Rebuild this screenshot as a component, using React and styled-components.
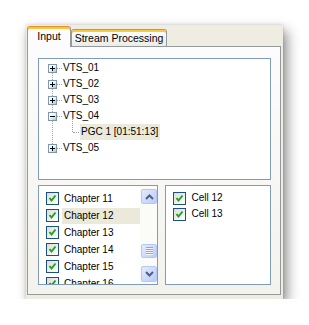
import React from 'react';
import styled, { createGlobalStyle } from 'styled-components';

const GlobalStyle = createGlobalStyle`
  body {
    margin: 0;
    background: #fff;
    font-family: "Liberation Sans", Arial, sans-serif;
    color: #000;
  }
`;

const Window = styled.div`
  margin: 25px 0 0 26px;
  width: 257px;
  height: 274px;
  box-sizing: border-box;
  padding: 1px 2px 4px 1px;
  background: #efede2;
  box-shadow: 4px 6px 12px rgba(0, 0, 0, 0.45), 0 0 3px rgba(0, 0, 0, 0.15);
  display: flex;
  flex-direction: column;
`;

const TabStrip = styled.div`
  display: flex;
  align-items: flex-end;
  height: 20px;
`;

const Tab = styled.div`
  box-sizing: border-box;
  position: relative;
  z-index: ${(props) => (props.active ? 1 : 0)};
  height: ${(props) => (props.active ? '21px' : '17px')};
  margin-bottom: ${(props) => (props.active ? '-1px' : '0')};
  width: ${(props) => props.w}px;
  display: flex;
  align-items: center;
  justify-content: center;
  padding-bottom: ${(props) => (props.active ? '3px' : '1px')};
  border: 1px solid #919b9c;
  border-bottom: none;
  border-top: 1px solid #e68b2c;
  border-radius: 3px 3px 0 0;
  box-shadow: inset 0 2px 0 #ffc73c;
  background: ${(props) =>
    props.active ? '#fcfcfe' : 'linear-gradient(#ffffff, #ecebe6)'};
  font-size: 10.5px;
  white-space: nowrap;
`;

const Page = styled.div`
  flex: 1;
  box-sizing: border-box;
  border: 1px solid #919b9c;
  background: linear-gradient(#fcfcfe, #f3f2ec);
  padding: 11px 9px 9px 10px;
  display: flex;
  flex-direction: column;
  gap: 5px;
`;

const Tree = styled.div`
  height: 122px;
  box-sizing: border-box;
  border: 1px solid #7f9db9;
  background: #fff;
  padding-top: 1px;
`;

const TreeRoot = styled.div`
  position: relative;

  &::before {
    content: '';
    position: absolute;
    left: 13px;
    top: 8px;
    bottom: 8px;
    border-left: 1px dotted #a0a0a0;
  }
`;

const TreeRow = styled.div`
  position: relative;
  display: flex;
  align-items: center;
  height: 16px;
  font-size: 10px;

  ${(props) =>
    props.child
      ? `
    padding-left: 41px;
    &::before {
      content: '';
      position: absolute;
      left: 33px;
      top: -6px;
      height: 14px;
      border-left: 1px dotted #a0a0a0;
    }
    &::after {
      content: '';
      position: absolute;
      left: 34px;
      top: 8px;
      width: 6px;
      border-top: 1px dotted #a0a0a0;
    }
  `
      : ''}
`;

const Expander = styled.span`
  position: relative;
  z-index: 1;
  box-sizing: border-box;
  width: 9px;
  height: 9px;
  margin-left: 9px;
  border: 1px solid #7898b5;
  background: linear-gradient(135deg, #ffffff 35%, #c6beae);
  display: flex;

  & > svg {
    display: block;
  }
`;

const Connector = styled.span`
  width: 5px;
  height: 0;
  border-top: 1px dotted #a0a0a0;
`;

const NodeLabel = styled.span`
  height: 16px;
  line-height: 16px;
  padding: 0 2px 0 1px;
  background: ${(props) => (props.selected ? '#ebe9da' : 'transparent')};
`;

const BottomRow = styled.div`
  display: flex;
  gap: 7px;
  height: 100px;
`;

const CheckList = styled.div`
  width: ${(props) => props.w}px;
  box-sizing: border-box;
  display: flex;
  border: 1px solid #7f9db9;
  background: #fff;
  overflow: hidden;
`;

const Items = styled.div`
  flex: 1;
  padding: 4px 0 0 7px;
  overflow: hidden;
`;

const CheckRow = styled.div`
  display: flex;
  align-items: center;
  height: ${(props) => props.h}px;
  gap: 3px;
  font-size: 10px;
`;

const Box = styled.span`
  flex: none;
  box-sizing: border-box;
  width: 13px;
  height: 13px;
  border: 1px solid #1c5180;
  background: linear-gradient(135deg, #dcdcd7, #ffffff);

  & > svg {
    display: block;
  }
`;

const ItemLabel = styled.span`
  flex: 1;
  height: 16px;
  line-height: 16px;
  padding-left: 2px;
  background: ${(props) => (props.selected ? '#ebe9da' : 'transparent')};
`;

const ScrollBar = styled.div`
  width: 17px;
  flex: none;
  box-sizing: border-box;
  padding: 3px 0 2px 1px;
  background: #fbfbf8;
  display: flex;
  flex-direction: column;
`;

const ScrollButton = styled.div`
  box-sizing: border-box;
  height: ${(props) => props.h}px;
  border: 1px solid #b5c7f2;
  border-radius: 2px;
  background: linear-gradient(135deg, #e4ebfd, #b9ccf8);
  display: flex;
  align-items: center;
  justify-content: center;
`;

const Track = styled.div`
  flex: ${(props) => props.grow};
`;

const Grip = styled.span`
  width: 7px;
  height: 8px;
  background: repeating-linear-gradient(
    #8da6e4 0,
    #8da6e4 1px,
    #eef3fe 1px,
    #eef3fe 2px
  );
`;

const Check = () => (
  <svg width="11" height="11" viewBox="0 0 11 11">
    <polyline
      points="2.5,5 4.5,7.5 8.5,2.5"
      fill="none"
      stroke="#21a121"
      strokeWidth="2"
    />
  </svg>
);

const Sign = ({ minus }) => (
  <svg width="7" height="7" viewBox="0 0 7 7" shapeRendering="crispEdges">
    <rect x="1" y="3" width="5" height="1" fill="#000" />
    {!minus && <rect x="3" y="1" width="1" height="5" fill="#000" />}
  </svg>
);

const Arrow = ({ up }) => (
  <svg width="9" height="6" viewBox="0 0 9 6">
    <polyline
      points={up ? '1,5 4.5,1.5 8,5' : '1,1 4.5,4.5 8,1'}
      fill="none"
      stroke="#4d6185"
      strokeWidth="2"
    />
  </svg>
);

const chapters = ['Chapter 11', 'Chapter 12', 'Chapter 13', 'Chapter 14', 'Chapter 15', 'Chapter 16'];
const cells = ['Cell 12', 'Cell 13'];

export default function App() {
  return (
    <>
      <GlobalStyle />
      <Window>
        <TabStrip>
          <Tab active w={44}>Input</Tab>
          <Tab w={96}>Stream Processing</Tab>
        </TabStrip>
        <Page>
          <Tree>
            <TreeRoot>
              {['VTS_01', 'VTS_02', 'VTS_03', 'VTS_04'].map((name) => (
                <TreeRow key={name}>
                  <Expander>
                    <Sign minus={name === 'VTS_04'} />
                  </Expander>
                  <Connector />
                  <NodeLabel>{name}</NodeLabel>
                </TreeRow>
              ))}
              <TreeRow child>
                <NodeLabel selected>PGC 1 [01:51:13]</NodeLabel>
              </TreeRow>
              <TreeRow>
                <Expander>
                  <Sign />
                </Expander>
                <Connector />
                <NodeLabel>VTS_05</NodeLabel>
              </TreeRow>
            </TreeRoot>
          </Tree>
          <BottomRow>
            <CheckList w={121}>
              <Items>
                {chapters.map((c) => (
                  <CheckRow key={c} h={17}>
                    <Box>
                      <Check />
                    </Box>
                    <ItemLabel selected={c === 'Chapter 12'}>{c}</ItemLabel>
                  </CheckRow>
                ))}
              </Items>
              <ScrollBar>
                <ScrollButton h={15}>
                  <Arrow up />
                </ScrollButton>
                <Track grow={39} />
                <ScrollButton h={14}>
                  <Grip />
                </ScrollButton>
                <Track grow={8} />
                <ScrollButton h={16}>
                  <Arrow />
                </ScrollButton>
              </ScrollBar>
            </CheckList>
            <CheckList w={106}>
              <Items>
                {cells.map((c) => (
                  <CheckRow key={c} h={16}>
                    <Box>
                      <Check />
                    </Box>
                    <ItemLabel>{c}</ItemLabel>
                  </CheckRow>
                ))}
              </Items>
            </CheckList>
          </BottomRow>
        </Page>
      </Window>
    </>
  );
}
